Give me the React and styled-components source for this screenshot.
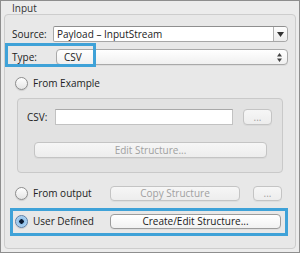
import React from "react";
import styled, { createGlobalStyle } from "styled-components";

const Global = createGlobalStyle`
  html, body { margin: 0; padding: 0; background: #ececec; }
  * { box-sizing: border-box; }
`;

const Window = styled.div`
  width: 300px;
  height: 253px;
  border: 1px solid #8e8e8e;
  background: #ececec;
  font-family: "Open Sans", "DejaVu Sans", sans-serif;
  font-size: 10px;
  color: #222;
  display: flex;
  flex-direction: column;
`;

const Title = styled.div`
  height: 13px;
  padding: 1px 0 0 11px;
  line-height: 13px;
  color: #333;
`;

const GroupBox = styled.div`
  margin: 0 3px;
  height: 235px;
  border: 1px solid #cdcdcd;
  border-radius: 4px;
  background: #e8e8e8;
  display: flex;
  flex-direction: column;
`;

const Row = styled.div`
  position: relative;
  display: flex;
  align-items: center;
  height: ${(p) => p.$h || 16}px;
  margin-top: ${(p) => p.$mt || 0}px;
  padding-left: ${(p) => p.$pl || 7}px;
`;

const Label = styled.span`
  width: ${(p) => p.$w}px;
  flex: none;
  white-space: nowrap;
  line-height: 13px;
`;

const Combo = styled.div`
  width: 235px;
  height: 16px;
  display: flex;
  border: 1px solid #a7a7a7;
  border-top-color: #8f8f8f;
  border-radius: 2px 4px 4px 2px;
  background: #fff;
  overflow: hidden;
`;

const ComboText = styled.div`
  flex: 1;
  padding-left: 3px;
  line-height: 14px;
  white-space: nowrap;
`;

const ComboArrow = styled.div`
  width: 14px;
  border-left: 1px solid #b0b0b0;
  background: linear-gradient(#fdfdfd, #ececec);
  display: flex;
  align-items: center;
  justify-content: center;
`;

const Popup = styled.div`
  width: 232px;
  height: 16px;
  border: 1px solid #a9a9a9;
  border-radius: 4px;
  background: linear-gradient(#ffffff, #f0f0f0);
  display: flex;
  align-items: center;
  justify-content: space-between;
  padding: 0 5px 0 7px;
  line-height: 14px;
  box-shadow: 0 1px 0 rgba(0, 0, 0, 0.05);
`;

const Highlight = styled.div`
  position: absolute;
  left: ${(p) => p.$l}px;
  top: ${(p) => p.$t}px;
  width: ${(p) => p.$w}px;
  height: ${(p) => p.$h}px;
  border: 3px solid #3fa2d8;
  pointer-events: none;
`;

const RadioWrap = styled.div`
  display: flex;
  align-items: center;
  gap: 5px;
  width: ${(p) => (p.$w ? `${p.$w}px` : "auto")};
  flex: none;
`;

const Radio = styled.span`
  width: 13px;
  height: 13px;
  border-radius: 50%;
  flex: none;
  border: 1px solid ${(p) => (p.$on ? "#5b7fa8" : "#8d8d8d")};
  background: ${(p) =>
    p.$on
      ? "radial-gradient(circle at 50% 50%, #0d1c33 0 2px, #8ec0ea 2.5px, #c9e1f6 100%)"
      : "linear-gradient(#ffffff, #e4e4e4)"};
  box-shadow: 0 1px 1px rgba(0, 0, 0, 0.12);
`;

const InnerBox = styled.div`
  margin: 8px 0 0 12px;
  width: 266px;
  height: 75px;
  border: 1px solid #c9c9c9;
  border-radius: 4px;
  background: #e2e2e2;
  display: flex;
  flex-direction: column;
`;

const Field = styled.div`
  width: 178px;
  height: 16px;
  background: #fff;
  border: 1px solid #c2c2c2;
  border-top-color: #a9a9a9;
`;

const Button = styled.div`
  width: ${(p) => p.$w}px;
  height: ${(p) => p.$h || 15}px;
  margin-left: ${(p) => p.$ml || 0}px;
  flex: none;
  border: 1px solid ${(p) => (p.$disabled ? "#c4c4c4" : "#9c9c9c")};
  border-radius: 4px;
  background: ${(p) =>
    p.$disabled
      ? "linear-gradient(#f6f6f6, #ededed)"
      : "linear-gradient(#ffffff, #f1f1f1)"};
  color: ${(p) => (p.$disabled ? "#a0a0a0" : "#1a1a1a")};
  display: flex;
  align-items: center;
  justify-content: center;
  line-height: 13px;
  white-space: nowrap;
  box-shadow: 0 1px 0 rgba(0, 0, 0, 0.04);
`;

const DownArrow = () => (
  <svg width="7" height="5" viewBox="0 0 7 5">
    <path d="M0 0 H7 L3.5 5 Z" fill="#333" />
  </svg>
);

const UpDown = () => (
  <svg width="5" height="9" viewBox="0 0 5 9">
    <path d="M0 3.5 L2.5 0 L5 3.5 Z M0 5.5 L2.5 9 L5 5.5 Z" fill="#444" />
  </svg>
);

export default function App() {
  return (
    <>
      <Global />
      <Window>
        <Title>Input</Title>
        <GroupBox>
          <Row $mt={11}>
            <Label $w={41}>Source:</Label>
            <Combo>
              <ComboText>Payload – InputStream</ComboText>
              <ComboArrow>
                <DownArrow />
              </ComboArrow>
            </Combo>
          </Row>
          <Row $mt={7}>
            <Label $w={44}>Type:</Label>
            <Popup>
              <span>CSV</span>
              <UpDown />
            </Popup>
            <Highlight $l={0} $t={-6} $w={91} $h={24} />
          </Row>
          <Row $mt={11} $h={14} $pl={10}>
            <RadioWrap>
              <Radio />
              <Label>From Example</Label>
            </RadioWrap>
          </Row>
          <InnerBox>
            <Row $mt={10} $pl={9}>
              <Label $w={28}>CSV:</Label>
              <Field />
              <Button $w={29} $h={16} $ml={10} $disabled>
                ...
              </Button>
            </Row>
            <Row $mt={17} $pl={16}>
              <Button $w={233} $h={16} $disabled>
                Edit Structure...
              </Button>
            </Row>
          </InnerBox>
          <Row $mt={13} $h={15} $pl={10}>
            <RadioWrap $w={95}>
              <Radio />
              <Label>From output</Label>
            </RadioWrap>
            <Button $w={130} $disabled>
              Copy Structure
            </Button>
            <Button $w={29} $ml={13} $disabled>
              ...
            </Button>
          </Row>
          <Row $mt={13} $h={15} $pl={10}>
            <RadioWrap $w={95}>
              <Radio $on />
              <Label>User Defined</Label>
            </RadioWrap>
            <Button $w={171}>Create/Edit Structure...</Button>
            <Highlight $l={5} $t={-6} $w={278} $h={28} />
          </Row>
        </GroupBox>
      </Window>
    </>
  );
}
